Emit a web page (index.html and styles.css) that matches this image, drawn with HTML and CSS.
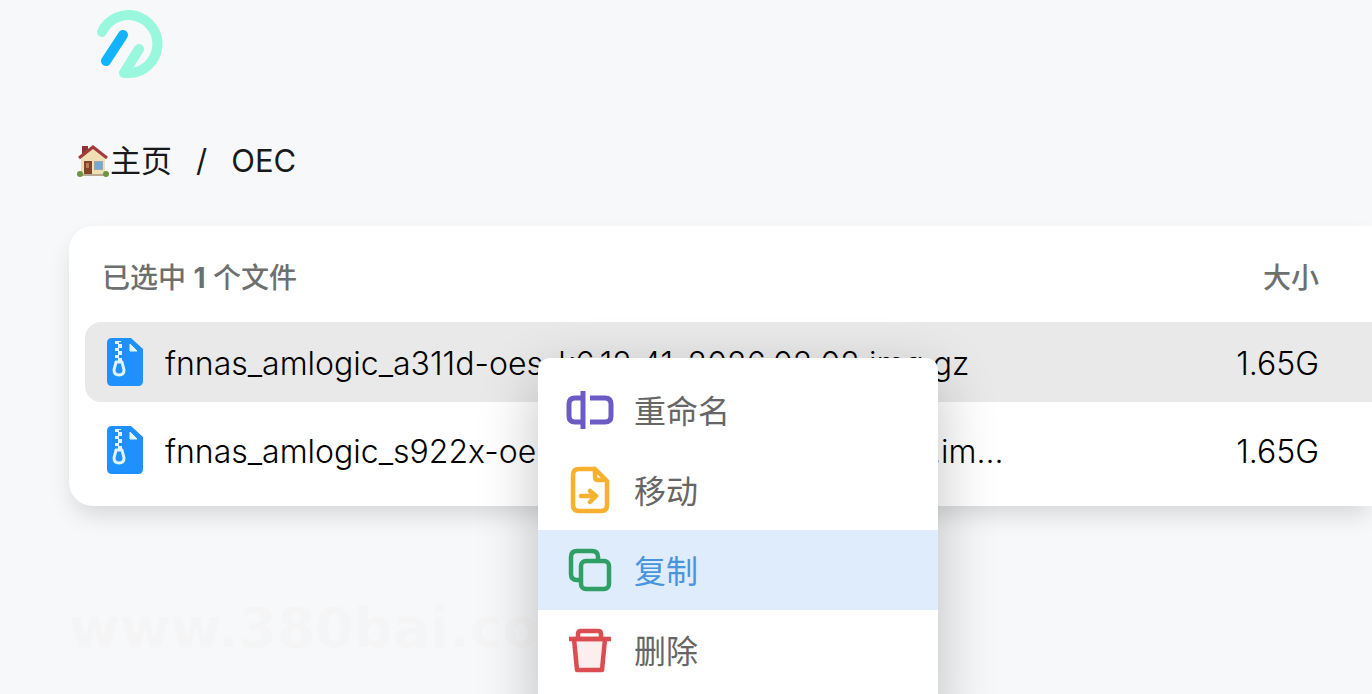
FILE: index.html
```html
<!DOCTYPE html>
<html lang="zh-CN">
<head>
  <meta charset="UTF-8">
  <meta name="viewport" content="width=device-width, initial-scale=1.0">
  <title>OEC</title>
  <link rel="stylesheet" href="styles.css">
</head>
<body>
  <svg class="sprite" aria-hidden="true">
    <symbol id="zip-icon" viewBox="0 0 36 48">
      <path d="M5 0h19l12 11v32q0 5-5 5H5q-5 0-5-5V5q0-5 5-5z" fill="#1e90ff"/>
      <path d="M23 6v7h7z" fill="#e3f4ff" stroke="#e3f4ff" stroke-linejoin="round"/>
      <path d="M8 3h4v3H8zM11 6h4v4h-4zM8 10h4v3H8zM11 13h4v4h-4zM8 17h4v3H8zM12 3h2v1h-2zM11 20h4v3h-4z" fill="#e3f4ff"/>
      <path d="M9 24h6l2 8q0 5-5 5t-5-5z" fill="none" stroke="#e3f4ff" stroke-width="3" stroke-linejoin="round"/>
    </symbol>
  </svg>

  <header class="header">
    <svg class="logo" viewBox="0 0 68 68" role="img" aria-label="Logo">
      <path d="M5 22A29 29 0 1 1 33 63H27L42 39" fill="none" stroke="#98f7dd" stroke-width="10" stroke-linecap="round" stroke-linejoin="round"/>
      <path d="M26 25L9 51" stroke="#12b4ff" stroke-width="10" stroke-linecap="round"/>
    </svg>
  </header>

  <nav class="breadcrumb">
    <a href="#" class="crumb">
      <svg class="house" viewBox="0 0 32 32" aria-hidden="true">
        <path d="M5 1h6v11H5z" fill="#8f3433"/>
        <path d="M4 13L16 3l12 10v17H4z" fill="#f0dfb4"/>
        <path d="M2 13L16 2l14 11" fill="none" stroke="#a33a3b" stroke-width="3"/>
        <path d="M7 16h8v14H7z" fill="#80452b"/>
        <path d="M9 18h3v5H9z" fill="#ba7a4d"/>
        <path d="M17 16h9v9h-9z" fill="#a0a6aa"/>
        <path d="M18 17h7v7h-7z" fill="#73a9d6"/>
        <path d="M4 29h24v2H4z" fill="#b9a994"/>
        <circle cx="3" cy="29" r="3" fill="#6f9344"/>
        <circle cx="29" cy="29" r="3" fill="#6f9344"/>
      </svg>主页</a>
    <span class="separator">/</span>
    <a href="#" class="crumb">OEC</a>
  </nav>

  <main class="file-card">
    <div class="list-header">
      <span>已选中 <b>1</b> 个文件</span>
      <span>大小</span>
    </div>
    <div class="file-row selected">
      <svg class="file-icon"><use href="#zip-icon"/></svg>
      <span class="file-name">fnnas_amlogic_a311d-oes_k6.12.41_2026.02.02.img.gz</span>
      <span class="file-size">1.65G</span>
    </div>
    <div class="file-row">
      <svg class="file-icon"><use href="#zip-icon"/></svg>
      <span class="file-name">fnnas_amlogic_s922x-oesplus_k6.12.41_2026.02.02.im...</span>
      <span class="file-size">1.65G</span>
    </div>
  </main>

  <div class="watermark">www.380bai.com</div>

  <div class="context-menu">
    <button type="button" class="menu-item">
      <svg class="menu-icon" viewBox="0 0 48 48" fill="none" stroke="#6d5bc5" stroke-width="5">
        <path d="M17 5v38M16 12H9q-6 0-6 6v12q0 6 6 6h7M24 12h15q6 0 6 6v12q0 6-6 6H24"/>
      </svg>
      <span class="menu-label">重命名</span>
    </button>
    <button type="button" class="menu-item">
      <svg class="menu-icon" viewBox="0 0 48 48" fill="none" stroke="#f8b12e" stroke-width="4.5" stroke-linecap="round" stroke-linejoin="round">
        <path d="M28 3H13q-6 0-6 6v30q0 6 6 6h22q6 0 6-6V15L29 3v8q0 3 3 3h8M15 30h14M24 25l6 5-6 6"/>
      </svg>
      <span class="menu-label">移动</span>
    </button>
    <button type="button" class="menu-item active">
      <svg class="menu-icon" viewBox="0 0 48 48" fill="none" stroke="#2f9f66" stroke-width="4.5" stroke-linejoin="round">
        <path d="M14 34h-3q-6 0-6-6V11q0-6 6-6h15q6 0 6 6v4"/>
        <rect x="15" y="15" width="28" height="28" rx="5"/>
      </svg>
      <span class="menu-label">复制</span>
    </button>
    <button type="button" class="menu-item">
      <svg class="menu-icon" viewBox="0 0 48 48" fill="none" stroke="#dc4d51" stroke-width="4.5" stroke-linejoin="round">
        <path d="M8 13l3 31h25l3-31z" fill="#fdeeee"/>
        <path d="M3 13h42M12 13V8q0-3 3-3h17q3 0 3 3v5"/>
      </svg>
      <span class="menu-label">删除</span>
    </button>
  </div>
</body>
</html>
```
FILE: styles.css
```css
body {
  margin: 0;
  min-height: 100vh;
  overflow: hidden;
  background-color: #f7f8fa;
  color: #171a19;
  font-family: Inter, "Noto Sans CJK SC", sans-serif;
  font-size: 31px;
  line-height: 48px;
}

.sprite {
  position: absolute;
  width: 0;
  height: 0;
}

.header {
  padding: 10px 97px 0;
}

.logo {
  display: block;
  width: 68px;
  height: 68px;
}

.breadcrumb {
  display: flex;
  align-items: center;
  gap: 24px;
  padding: 59px 77px 41px;
}

.crumb {
  display: flex;
  align-items: center;
  color: inherit;
  text-decoration: none;
}

.house {
  width: 32px;
  height: 32px;
  margin-right: 1px;
}

.file-card {
  margin-left: 69px;
  padding: 16px 0 16px 16px;
  background-color: #fff;
  border-radius: 24px 0 0 24px;
  box-shadow: 0 12px 24px -4px rgba(0, 0, 0, 0.14);
}

.list-header {
  display: flex;
  justify-content: space-between;
  padding: 12px 53px 20px 17px;
  color: #6c706f;
  font-size: 28px;
  font-weight: 500;
}

.file-row {
  display: flex;
  align-items: center;
  gap: 22px;
  height: 80px;
  margin-bottom: 8px;
  padding: 0 53px 0 22px;
  border-radius: 16px 0 0 16px;
  color: #000;
  font-size: 32px;
  font-weight: 300;
}

.file-row:last-child {
  margin-bottom: 0;
}

.file-row.selected {
  background-color: #e9e9e9;
}

.file-icon {
  flex: none;
  width: 36px;
  height: 48px;
}

.file-name {
  flex: 4 1 0;
  min-width: 0;
  padding-top: 3px;
  overflow: hidden;
  text-overflow: ellipsis;
  white-space: nowrap;
}

.file-size {
  flex: 1 1 0;
  padding-top: 3px;
  text-align: right;
}

.watermark {
  padding: 98px 69px 0;
  color: #f5f5f6;
  font-family: "DejaVu Sans", sans-serif;
  font-size: 55px;
  font-weight: bold;
}

/* Right click menu */
.context-menu {
  position: absolute;
  top: 358px;
  left: 538px;
  width: 400px;
  padding: 12px 0 32px;
  box-sizing: border-box;
  background-color: #fff;
  border-radius: 12px;
  box-shadow: 0 20px 60px rgba(0, 0, 0, 0.24);
}

.menu-item {
  display: flex;
  align-items: center;
  gap: 20px;
  width: 100%;
  height: 80px;
  padding: 0 28px;
  border: none;
  background: none;
  color: #666;
  font: inherit;
  font-size: 32px;
  cursor: pointer;
}

.menu-item.active {
  background-color: #dfecfc;
  color: #4795dc;
}

.menu-icon {
  width: 48px;
  height: 48px;
}

.menu-label {
  padding-top: 3px;
}
```
